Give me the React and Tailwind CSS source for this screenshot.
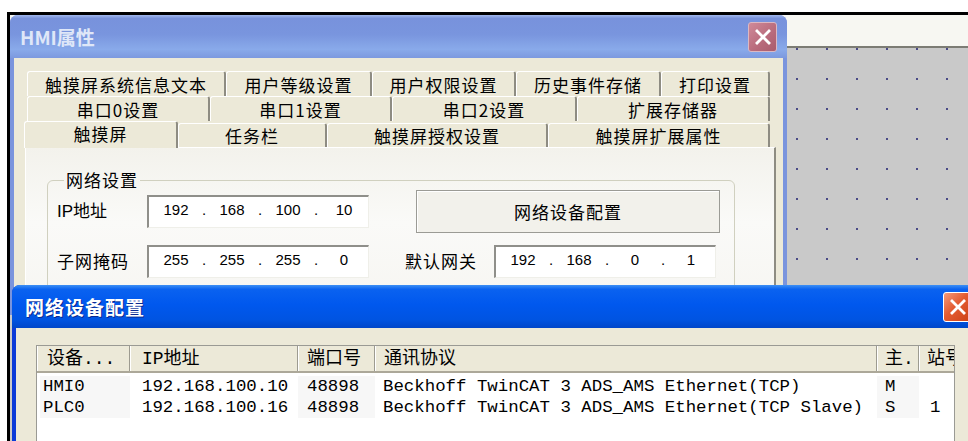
import React from "react";

const tabRow1 = [
  { text: "触摸屏系统信息文本", w: "w-[199px]" },
  { text: "用户等级设置", w: "w-[146px]" },
  { text: "用户权限设置", w: "w-[144px]" },
  { text: "历史事件存储", w: "w-[145px]" },
  { text: "打印设置", w: "w-[109px]" },
];

const tabRow2 = [
  { text: "串口0设置", w: "w-[183px]" },
  { text: "串口1设置", w: "w-[182px]" },
  { text: "串口2设置", w: "w-[185px]" },
  { text: "扩展存储器", w: "w-[193px]" },
];

const tabRow3 = [
  { text: "任务栏", w: "w-[149px]" },
  { text: "触摸屏授权设置", w: "w-[221px]" },
  { text: "触摸屏扩展属性", w: "w-[222px]" },
];

const devices = [
  { name: "HMI0", ip: "192.168.100.10", port: "48898", proto: "Beckhoff TwinCAT 3 ADS_AMS Ethernet(TCP)", role: "M", station: "" },
  { name: "PLC0", ip: "192.168.100.16", port: "48898", proto: "Beckhoff TwinCAT 3 ADS_AMS Ethernet(TCP Slave)", role: "S", station: "1" },
];

function Tab({ text, className = "" }) {
  return (
    <div
      className={`flex shrink-0 items-center justify-center rounded-t-[3px] border-t border-l border-white border-r-2 border-r-[#8e8c82] bg-[#ece9d8] text-[17px] leading-none tracking-[1px] text-black ${className}`}
    >
      {text}
    </div>
  );
}

function IpBox({ parts, className = "" }) {
  return (
    <div
      className={`flex h-[33px] w-[222px] shrink-0 items-center border-t-2 border-l-2 border-b border-r border-t-[#8f8f8a] border-l-[#8f8f8a] border-b-[#efefe9] border-r-[#efefe9] bg-white pb-[3px] pl-[5px] text-[15px] text-black [font-family:'Liberation_Sans',sans-serif] ${className}`}
    >
      {parts.map((p, i) => (
        <React.Fragment key={i}>
          {i > 0 && <span className="w-[12px] text-center">.</span>}
          <span className="w-[44px] text-center">{p}</span>
        </React.Fragment>
      ))}
    </div>
  );
}

function CloseIcon() {
  return (
    <svg width="16" height="16" viewBox="0 0 16 16">
      <path d="M2 2 L14 14 M14 2 L2 14" stroke="#fff" strokeWidth="2.8" strokeLinecap="square" />
    </svg>
  );
}

function HmiWindow() {
  return (
    <div className="absolute left-[10px] top-[15px] flex h-[300px] w-[777px] flex-col rounded-t-[8px] bg-[#7a94dd]">
      {/* inactive title bar */}
      <div className="flex h-[43px] shrink-0 items-center rounded-t-[8px] bg-[linear-gradient(180deg,#a2b8ec_0%,#7892dc_8%,#7995de_45%,#89aaea_80%,#7c99df_100%)] px-[10px]">
        <span className="text-[19px] font-bold leading-none text-[#dfe7f8]">HMI属性</span>
        <div className="ml-auto flex h-[30px] w-[29px] items-center justify-center rounded-[3px] border border-[#dcb8c2] bg-[linear-gradient(135deg,#cf8a99_0%,#b86a7b_60%,#a95c6d_100%)]">
          <CloseIcon />
        </div>
      </div>

      <div className="mx-[4px] flex flex-1 flex-col bg-[#ece9d8] pl-[11px] pt-[13px]">
        {/* tab rows */}
        <div className="ml-[2px] flex h-[25px]">
          {tabRow1.map((t) => (
            <Tab key={t.text} text={t.text} className={`${t.w} h-full`} />
          ))}
        </div>
        <div className="ml-[2px] flex h-[25px]">
          {tabRow2.map((t) => (
            <Tab key={t.text} text={t.text} className={`${t.w} h-full`} />
          ))}
        </div>
        <div className="relative z-10 -mb-px ml-[2px] flex h-[27px] items-start">
          <Tab text="触摸屏" className="-ml-[3px] h-[27px] w-[154px] pb-[3px]" />
          {tabRow3.map((t) => (
            <Tab key={t.text} text={t.text} className={`${t.w} mt-[2px] h-[24px]`} />
          ))}
        </div>

        {/* tab panel */}
        <div className="w-[751px] flex-1 border-t border-l border-white border-r-2 border-r-[#8e8c82] bg-[linear-gradient(180deg,#f3f2ec_0%,#fafaf8_45%,#f6f5f1_100%)] pl-[21px] pt-[22px]">
          <fieldset className="w-[688px] rounded-[6px] border border-[#d0d0bf] pb-[20px] pl-[9px]">
            <legend className="ml-[7px] px-[2px] text-[17px] leading-[20px] tracking-[1px] text-black">网络设置</legend>
            <div className="flex h-[43px] items-center">
              <span className="w-[90px] shrink-0 text-[17px] text-black [font-family:'Liberation_Sans','Noto_Sans_CJK_SC',sans-serif]">IP地址</span>
              <IpBox parts={["192", "168", "100", "10"]} />
              <div className="ml-[47px] flex h-[43px] w-[304px] shrink-0 items-center justify-center border border-[#9b9b95] bg-[#f2f1eb] text-[17px] tracking-[1px] text-black shadow-[inset_1px_1px_#ffffff]">
                网络设备配置
              </div>
            </div>
            <div className="mt-[11px] flex h-[34px] items-center">
              <span className="w-[90px] shrink-0 text-[17px] tracking-[1px] text-black">子网掩码</span>
              <IpBox parts={["255", "255", "255", "0"]} />
              <span className="ml-[36px] w-[89px] shrink-0 text-[17px] tracking-[1px] text-black">默认网关</span>
              <IpBox parts={["192", "168", "0", "1"]} />
            </div>
          </fieldset>
        </div>
      </div>
    </div>
  );
}

function NetWindow() {
  const mono = "[font-family:'Liberation_Mono','Noto_Sans_CJK_SC',monospace]";
  const head = `flex h-full shrink-0 items-center border-l border-l-white border-r border-r-[#9d9b90] bg-[#ece9d8] text-[18px] leading-none text-black ${mono}`;
  const cell = "h-[21px] overflow-hidden whitespace-pre leading-[21px]";
  return (
    <div className="absolute left-[12px] top-[285px] flex h-[170px] w-[970px] flex-col rounded-t-[8px] bg-[#0a3ad8]">
      {/* active title bar */}
      <div className="flex h-[43px] shrink-0 items-center rounded-t-[8px] bg-[linear-gradient(180deg,#3d8ff4_0%,#0a62f0_10%,#0058ee_45%,#0054e2_80%,#0046c9_100%)] pl-[13px] pr-[10px]">
        <span className="text-[19px] font-bold leading-none tracking-[1px] text-white [text-shadow:1px_1px_#0a2a90]">网络设备配置</span>
        <div className="ml-auto flex h-[30px] w-[29px] items-center justify-center rounded-[3px] border border-white bg-[linear-gradient(135deg,#f39a7c_0%,#e35b31_45%,#cc4116_100%)]">
          <CloseIcon />
        </div>
      </div>

      <div className="mx-[4px] flex-1 bg-[#ece9d8] pl-[20px] pt-[17px]">
        <div className="h-[200px] w-[919px] overflow-hidden border border-[#9a9a94] bg-white">
          {/* list header */}
          <div className="flex h-[27px] border-b-2 border-b-[#aca899]">
            <div className={`${head} w-[93px] pl-[9px]`}>设备...</div>
            <div className={`${head} w-[168px] pl-[11px]`}>IP地址</div>
            <div className={`${head} w-[77px] pl-[8px]`}>端口号</div>
            <div className={`${head} w-[502px] pl-[8px]`}>通讯协议</div>
            <div className={`${head} w-[42px] pl-[7px]`}>主.</div>
            <div className={`${head} w-[60px] pl-[7px]`}>站号</div>
          </div>
          {/* list rows */}
          <div className="flex pt-[3px] text-[17.4px] text-black [font-family:'Liberation_Mono',monospace]">
            <div className="w-[93px] shrink-0 pl-[3px]">
              <div className="bg-[#f7f7f7] pl-[3px]">
                {devices.map((d) => (
                  <div key={d.name} className={cell}>{d.name}</div>
                ))}
              </div>
            </div>
            <div className="w-[168px] shrink-0 pl-[12px]">
              {devices.map((d) => (
                <div key={d.name} className={cell}>{d.ip}</div>
              ))}
            </div>
            <div className="w-[77px] shrink-0 bg-[#f7f7f7] pl-[9px]">
              {devices.map((d) => (
                <div key={d.name} className={cell}>{d.port}</div>
              ))}
            </div>
            <div className="w-[502px] shrink-0 pl-[8px]">
              {devices.map((d) => (
                <div key={d.name} className={cell}>{d.proto}</div>
              ))}
            </div>
            <div className="w-[42px] shrink-0 bg-[#f7f7f7] pl-[8px]">
              {devices.map((d) => (
                <div key={d.name} className={cell}>{d.role}</div>
              ))}
            </div>
            <div className="w-[36px] shrink-0 pl-[11px]">
              {devices.map((d) => (
                <div key={d.name} className={cell}>{d.station}</div>
              ))}
            </div>
          </div>
        </div>
      </div>
    </div>
  );
}

export default function App() {
  return (
    <div className="relative h-[441px] w-[968px] overflow-hidden bg-white pl-[7px] pt-[12px] [font-family:'Noto_Sans_CJK_SC',sans-serif]">
      {/* designer canvas behind the dialogs */}
      <div className="flex h-[429px] flex-col border-t-[3px] border-l-[3px] border-black">
        <div className="h-[31px] bg-[#f7f7f2]" />
        <div className="h-[2px] bg-[#7c7c74]" />
        <div className="relative flex-1 bg-[#c9c9c9]">
          <svg className="absolute inset-0 h-full w-full">
            <defs>
              <pattern id="grid-dots" width="30" height="30" patternUnits="userSpaceOnUse">
                <rect x="6" y="0" width="2" height="2" fill="#4a4a86" />
              </pattern>
            </defs>
            <rect width="100%" height="100%" fill="url(#grid-dots)" />
          </svg>
        </div>
      </div>

      <HmiWindow />
      <NetWindow />
    </div>
  );
}
